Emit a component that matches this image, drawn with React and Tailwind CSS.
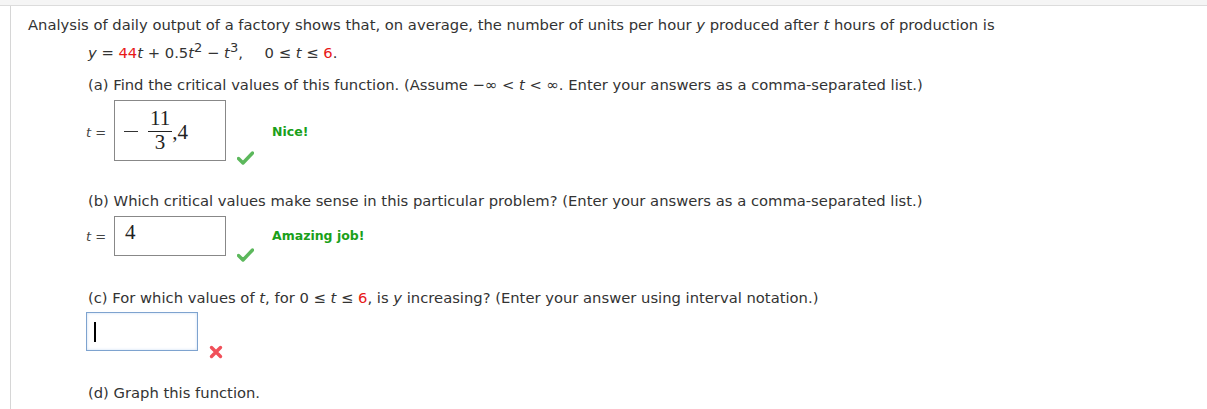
import React from "react";

function Check() {
  return (
    <svg width="17" height="14" viewBox="0 0 17 14" className="shrink-0">
      <path d="M1.5 7.5 L6 12 L15.5 2" fill="none" stroke="#5cb85c" strokeWidth="3.4" strokeLinecap="round" strokeLinejoin="round" />
    </svg>
  );
}

function Cross() {
  return (
    <svg width="14" height="14" viewBox="0 0 14 14" className="shrink-0">
      <path d="M2.5 2.5 L11.5 11.5 M11.5 2.5 L2.5 11.5" fill="none" stroke="#f0505a" strokeWidth="3.4" strokeLinecap="round" />
    </svg>
  );
}

const T = () => <i>t</i>;

export default function App() {
  return (
    <div className="w-[1207px] h-[409px] bg-white overflow-hidden text-[#333] font-['DejaVu_Sans',Verdana,sans-serif] text-[14.75px]">
      <div className="h-[6px] bg-[#f5f5f5] border-b border-[#dcdcdc]" />
      <div className="ml-[10px] border-l border-[#d6d6d6] h-full pl-[17px] pt-[9px]">
        <p className="leading-[20px]">
          Analysis of daily output of a factory shows that, on average, the number of units per hour <i>y</i> produced after <T /> hours of production is
        </p>
        <div className="pl-[60px]">
          <p className="mt-[8px] leading-[20px]">
            <i>y</i> = <span className="text-[#e81818]">44</span><T /> + 0.5<T /><sup className="text-[13px]">2</sup> − <T /><sup className="text-[13px]">3</sup>,{" "}
            <span className="ml-[17px]">0 ≤ <T /> ≤ <span className="text-[#e81818]">6</span>.</span>
          </p>
          <p className="mt-[12px] leading-[20px]">
            (a) Find the critical values of this function. (Assume −∞ &lt; <T /> &lt; ∞. Enter your answers as a comma-separated list.)
          </p>

          <div className="flex items-start mt-[5px] -ml-[2px]">
            <span className="text-[13px] mt-[23px] w-[28px] text-[#444]"><i>t</i> =</span>
            <div className="w-[112px] h-[61px] border border-[#888] flex items-center pl-[9px] font-['Liberation_Serif',serif] text-[21px] text-[#222]">
              <span className="w-[14px] h-[1px] bg-[#333] mr-[10px] mt-[1px]" />
              <span className="flex flex-col items-center leading-[21px]">
                <span className="px-[2px] pb-[2px]">11</span>
                <span className="border-t border-[#222] w-full text-center">3</span>
              </span>
              <span className="mt-[4px]">,4</span>
            </div>
            <div className="ml-[11px] mt-[51px]"><Check /></div>
            <span className="ml-[18px] mt-[23px] text-[12.5px] font-bold text-[#1aa01a]">Nice!</span>
          </div>

          <p className="mt-[26px] leading-[20px]">
            (b) Which critical values make sense in this particular problem? (Enter your answers as a comma-separated list.)
          </p>
          <div className="flex items-start mt-[5px] -ml-[2px]">
            <span className="text-[13px] mt-[11px] w-[28px] text-[#444]"><i>t</i> =</span>
            <div className="w-[112px] h-[40px] border border-[#888] flex items-center pl-[10px] font-['Liberation_Serif',serif] text-[21px] text-[#222] pb-[6px]">
              4
            </div>
            <div className="ml-[11px] mt-[32px]"><Check /></div>
            <span className="ml-[18px] mt-[11px] text-[12.5px] font-bold text-[#1aa01a]">Amazing job!</span>
          </div>

          <p className="mt-[26px] leading-[20px]">
            (c) For which values of <T />, for 0 ≤ <T /> ≤ <span className="text-[#e81818]">6</span>, is <i>y</i> increasing? (Enter your answer using interval notation.)
          </p>
          <div className="flex items-start mt-[4px] -ml-[2px]">
            <div className="w-[112px] h-[39px] border border-[#7ea3cf] shadow-[inset_0_0_3px_#c9dcf2] flex items-center pl-[7px]">
              <span className="w-[2px] h-[20px] bg-black" />
            </div>
            <div className="ml-[11px] mt-[33px]"><Cross /></div>
          </div>

          <p className="mt-[24px] leading-[20px]">(d) Graph this function.</p>
        </div>
      </div>
    </div>
  );
}
